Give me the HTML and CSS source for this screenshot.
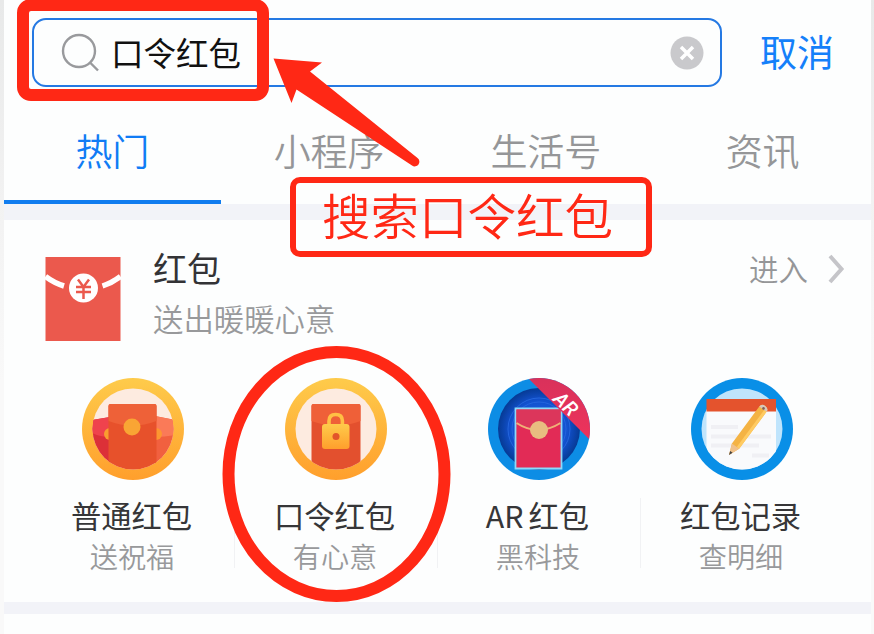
FILE: index.html
```html
<!DOCTYPE html>
<html lang="zh-CN">
<head>
<meta charset="utf-8">
<title>口令红包</title>
<link rel="stylesheet" href="styles.css">
</head>
<body>
<main class="screen">
  <header class="search-row">
    <div class="search-box">
      <svg class="search-icon" viewBox="0 0 40 42"><circle cx="18" cy="18" r="16"/><path d="M29.5 30 37 37.5"/></svg>
      <span class="query">口令红包</span>
      <svg class="clear-icon" viewBox="0 0 34 34"><circle cx="17" cy="17" r="16.5"/><path d="m11 11 12 12M23 11 11 23"/></svg>
    </div>
    <a class="cancel">取消</a>
  </header>
  <nav class="tabs">
    <a class="tab active">热门</a>
    <a class="tab">小程序</a>
    <a class="tab">生活号</a>
    <a class="tab">资讯</a>
  </nav>
  <section class="result">
    <div class="app">
      <svg class="app-icon" viewBox="0 0 76 86">
        <path d="M.5 1h75v84H.5z" fill="#eb594d"/>
        <path d="M.5 20.500Q9 27 19 30" fill="none" stroke="#fff" stroke-width="5.500"/>
        <path d="M75.500 20.500Q67 27 57.500 30" fill="none" stroke="#fff" stroke-width="5.500"/>
        <circle cx="38.500" cy="32" r="14.500" fill="#fff"/>
        <path d="m33 23.500 5.500 7.500 5.500-7.500M31 31h15M31 36h15M38.500 31v12" fill="none" stroke="#eb594d" stroke-width="2.500"/>
      </svg>
      <div class="app-text">
        <h1>红包</h1>
        <p>送出暖暖心意</p>
      </div>
      <a class="enter">进入<svg viewBox="0 0 18 32"><path d="m3 3 11.5 13L3 29"/></svg></a>
    </div>
    <div class="services">
      <div class="service">
        <svg class="icon" viewBox="0 0 102 102">
          <defs>
            <linearGradient id="gold" x2="0" y2="1"><stop stop-color="#fecb4b"/><stop offset="1" stop-color="#ff9f2c"/></linearGradient>
            <clipPath id="inner"><circle cx="51" cy="51" r="40.5"/></clipPath>
            <clipPath id="outer"><circle cx="51" cy="51" r="51"/></clipPath>
          </defs>
          <circle cx="51" cy="51" r="51" fill="url(#gold)"/>
          <g clip-path="url(#inner)">
            <path d="M0 0h102v102H0z" fill="#fdebe0"/>
            <path d="m10 42 18-3v63H10z" fill="#dc3038"/>
            <path d="m10 42 18-3v20q-10 0-18-4z" fill="#ef424d"/>
            <path d="m73 38 20 4v60H73z" fill="#f1603f"/>
            <path d="m73 38 20 4v15q-10 2-20 2z" fill="#fa7a58"/>
            <circle cx="28" cy="56" r="6" fill="#f99d30"/><circle cx="74" cy="56" r="6" fill="#fd9631"/>
            <rect x="26.500" y="26" width="48" height="80" rx="2" fill="#e7512b"/>
            <path d="M26.500 43V28q0-2 2-2h44q2 0 2 2v15q-24 9-48 0z" fill="#ee6138"/>
            <circle cx="50" cy="49" r="8.500" fill="#f9a534"/>
          </g>
        </svg>
        <h2>普通红包</h2><p>送祝福</p>
      </div>
      <div class="service">
        <svg class="icon" viewBox="0 0 102 102">
          <circle cx="51" cy="51" r="51" fill="url(#gold)"/>
          <g clip-path="url(#inner)">
            <path d="M0 0h102v102H0z" fill="#fdebe0"/>
            <rect x="26.500" y="26" width="49" height="80" rx="2" fill="#e3502e"/>
            <path d="M26.500 43V28q0-2 2-2h45q2 0 2 2v15q-24 9-49 0z" fill="#ef6038"/>
          </g>
          <path d="M44 48v-5q0-6.500 6.700-6.500t6.700 6.500v5" fill="none" stroke="#ffc044" stroke-width="3.600"/>
          <rect x="37" y="46" width="27.500" height="25" rx="3" fill="url(#gold)"/>
          <circle cx="51" cy="58.500" r="3.500" fill="#e2552a"/>
        </svg>
        <h2>口令红包</h2><p>有心意</p>
      </div>
      <div class="service">
        <svg class="icon" viewBox="0 0 102 102">
          <defs>
            <linearGradient id="rose" x2="0" y2="1"><stop stop-color="#d9315b"/><stop offset="1" stop-color="#ee335b"/></linearGradient>
            <radialGradient id="deep"><stop stop-color="#2167eb"/><stop offset=".7" stop-color="#1251ce"/><stop offset="1" stop-color="#063a94"/></radialGradient>
          </defs>
          <circle cx="51" cy="51" r="51" fill="#0d8de5"/>
          <circle cx="51" cy="51" r="41" fill="url(#deep)"/>
          <g fill="none" stroke="#2465dd"><circle cx="51" cy="51" r="31"/><circle cx="51" cy="51" r="27"/></g>
          <path d="M27.500 30.500h46v60h-46z" fill="#e22b56" stroke="#8bdafa" stroke-width="1.800"/>
          <path d="M28.500 31.500h44v14Q50 61 28.500 45z" fill="#dc365b"/>
          <path d="M28.500 45Q50 59 72.500 45" fill="none" stroke="#efb177" stroke-width="2"/>
          <circle cx="51" cy="52" r="9" fill="#e8bd80"/>
          <path d="M40 0h62v62z" fill="url(#rose)" clip-path="url(#outer)"/>
          <text class="ar-mark" transform="translate(64 22) rotate(44)">AR</text>
        </svg>
        <h2>AR<span class="cjk-gap">红包</span></h2><p>黑科技</p>
      </div>
      <div class="service">
        <svg class="icon" viewBox="0 0 102 102">
          <circle cx="51" cy="51" r="51" fill="#098fe7"/>
          <circle cx="51" cy="51" r="40.500" fill="#bfe4fc"/>
          <g clip-path="url(#inner)">
            <path d="M15.500 21H85v72H15.500z" fill="#f9fafc"/>
          </g>
          <path d="M15.500 21H85v12.500H15.500z" fill="#e4532d"/>
          <path d="M20 49h27M20 58.500h60M20 67.500h48M61 77.500h17" stroke="#f0f0f4" stroke-width="4"/>
          <g transform="translate(38 77) rotate(36.500)">
            <path d="M-4.500-11V-57q0-4 4.500-4t4.500 4v46L0 0z" fill="#f4b344"/>
            <path d="M1.500-11v-46h3v46z" fill="#ffcb62"/>
            <path d="M-4.500-11h9L0 0z" fill="#f0c18b"/>
            <path d="m-1.500-4 3 0L0 0z" fill="#444"/>
            <path d="M-4.500-57q0-4 4.500-4t4.500 4z" fill="#d8c7bb"/><circle cx="0" cy="-58" r="1.300" fill="#815f57"/>
          </g>
        </svg>
        <h2>红包记录</h2><p>查明细</p>
      </div>
    </div>
  </section>
</main>
<svg class="marks" viewBox="0 0 874 634">
  <rect x="23" y="5" width="240" height="90" rx="8" stroke-width="12"/>
  <ellipse cx="336.500" cy="474" rx="108" ry="122" stroke-width="12"/>
  <path class="arrow" d="m273.500 58.500 48.500 4-12 9L417.500 158a4.500 4.500 0 0 1-5.500 7.500L296.500 89.500l-5 13.500z"/>
</svg>
<div class="callout">搜索口令红包</div>
</body>
</html>
```
FILE: styles.css
```css
* { box-sizing: border-box; }

body {
  margin: 0;
  width: 874px;
  height: 634px;
  overflow: hidden;
  position: relative;
  background: linear-gradient(#e8e9e9, #f2f2f2 200px, #f9f9f9 380px);
  font-family: "Noto Sans CJK SC", sans-serif;
  font-weight: 350;
}

h1, h2, p { margin: 0; font-weight: inherit; white-space: nowrap; }

.screen {
  width: 867px;
  height: 634px;
  margin-left: 4px;
  background: #fdfefe;
}

.search-row {
  display: flex;
  align-items: center;
  height: 87px;
  padding: 18px 0 0 28px;
}

.search-box {
  display: flex;
  align-items: center;
  width: 690px;
  height: 69px;
  padding: 0 16px 0 27px;
  border: 2px solid #2579e3;
  border-radius: 14px;
}

.search-icon {
  width: 40px;
  height: 42px;
  margin-top: 3px;
  fill: none;
  stroke: #999a9d;
  stroke-width: 2.4;
}

.query {
  flex: 1;
  margin: -2px 0 0 10px;
  font-size: 32.5px;
  font-weight: 400;
  line-height: 48px;
  color: #111;
}

.clear-icon { width: 34px; height: 34px; fill: #c9c9cc; stroke: #fff; stroke-width: 3.5; }
.clear-icon circle { stroke: none; }

.cancel { margin: -3px 0 0 38px; font-size: 37px; font-weight: 400; line-height: 54px; color: #1480fa; }

.tabs { display: grid; grid-template-columns: repeat(4, 1fr); height: 117px; }

.tab {
  padding-top: 33px;
  border-bottom: 4px solid transparent;
  text-align: center;
  font-size: 37px;
  line-height: 60px;
  color: #959698;
}

.tab.active { color: #107cf5; border-color: #107cef; }

.result {
  height: 410px;
  border-top: 16px solid #f2f3f8;
  border-bottom: 12px solid #f2f3f8;
}

.app { display: flex; height: 158px; padding: 36px 26px 0 41px; }
.app-icon { width: 76px; height: 86px; flex: none; }
.app-text { margin: -13px 0 0 32px; }
.app-text h1 { font-size: 34px; font-weight: 400; line-height: 50px; color: #333336; }
.app-text p { font-size: 30.4px; line-height: 51px; color: #98999b; }

.enter {
  display: flex;
  align-items: center;
  height: 24px;
  margin-left: auto;
  font-size: 29.5px;
  color: #959698;
}

.enter svg { width: 18px; height: 32px; margin: 2px 0 0 19px; fill: none; stroke: #c5c5c9; stroke-width: 4; }

.services { display: grid; grid-template-columns: repeat(4, 203px); margin-left: 27.5px; }

.service { position: relative; display: flex; flex-direction: column; align-items: center; }
.icon { display: block; width: 102px; height: 102px; }

.service + .service::before {
  content: "";
  position: absolute;
  left: -1px;
  top: 120px;
  width: 1px;
  height: 70px;
  background: #f1f2f4;
}

.service h2 { margin: 13px 3px 0 0; font-size: 30.3px; font-weight: 400; line-height: 44px; color: #363638; }
.service p { margin: 1px 2px 0 0; font-size: 28.2px; line-height: 36px; color: #98999b; }
.cjk-gap { margin-left: 5px; }

.ar-mark { font-family: Roboto, sans-serif; font-size: 20px; font-weight: 500; font-style: italic; fill: #fff; }

.marks { position: absolute; inset: 0; width: 874px; height: 634px; fill: none; stroke: #ff2815; }
.marks .arrow { fill: #ff2815; stroke: none; }

.callout {
  position: absolute;
  left: 290px;
  top: 177px;
  width: 362px;
  height: 80px;
  border: 6px solid #ff2815;
  border-radius: 10px;
  padding-left: 26px;
  font-size: 48.5px;
  font-weight: 350;
  line-height: 62px;
  color: #ff2815;
  white-space: nowrap;
}
```
